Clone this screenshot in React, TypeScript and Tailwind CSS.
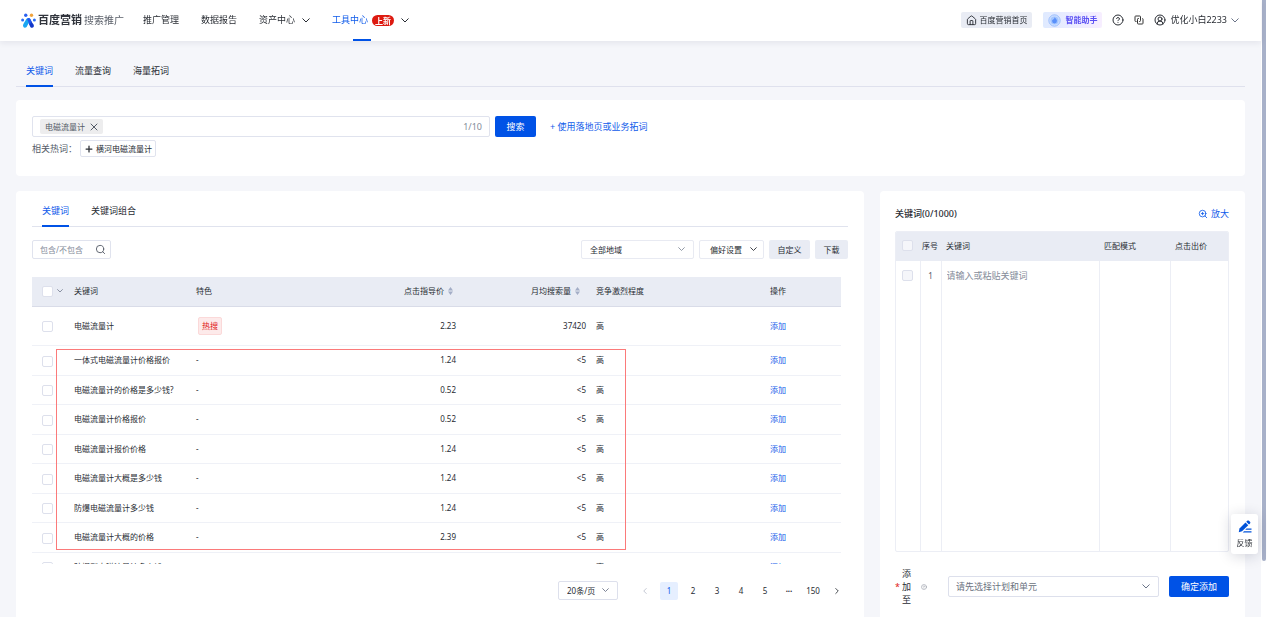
import type { ReactNode } from "react";
import clsx from "clsx";
import { ChevronLeft, ChevronRight, CircleHelp, CircleUserRound, House, Plus, Search, X, ZoomIn } from "lucide-react";

type Row = {
  word: string;
  price: string;
  volume: string;
  hot?: boolean;
};

const ROWS: Row[] = [
  { word: "电磁流量计", price: "2.23", volume: "37420", hot: true },
  { word: "一体式电磁流量计价格报价", price: "1.24", volume: "<5" },
  { word: "电磁流量计的价格是多少钱?", price: "0.52", volume: "<5" },
  { word: "电磁流量计价格报价", price: "0.52", volume: "<5" },
  { word: "电磁流量计报价价格", price: "1.24", volume: "<5" },
  { word: "电磁流量计大概是多少钱", price: "1.24", volume: "<5" },
  { word: "防爆电磁流量计多少钱", price: "1.24", volume: "<5" },
  { word: "电磁流量计大概的价格", price: "2.39", volume: "<5" },
  { word: "防爆型电磁流量计多少钱", price: "", volume: "" },
];

const PAGES = ["1", "2", "3", "4", "5"];

function Logo() {
  return (
    <svg viewBox="0 0 30 30" className="size-[15px]" aria-hidden="true">
      <circle cx="9.5" cy="4.5" r="3.4" fill="#2b62f0" />
      <circle cx="21" cy="4.5" r="3.4" fill="#f0a23c" />
      <circle cx="3.2" cy="14" r="3" fill="#2b6df5" />
      <circle cx="26.8" cy="14" r="3" fill="#2b6df5" />
      <path d="M11 12h6l8 11c2 3.500 0 6.500-3 6.500-2 0-3-1-4-3z" fill="#1237c9" />
      <path d="M15 10c-2.500 0-4 1.500-5.200 3.500L4.800 22c-2 3.500 0 7.500 3.200 7.500 2.200 0 3.300-1.500 4.300-3.500L19 13c-1-2-2.200-3-4-3z" fill="#1ba6f2" />
      <path d="M12 12c2-2.500 5-2.500 7 .5l2 4-3.500 7z" fill="#2257ee" />
    </svg>
  );
}

function ChevronDown({ className }: { className?: string }) {
  return (
    <svg
      viewBox="0 0 16 10"
      className={clsx("shrink-0", className)}
      fill="none"
      stroke="currentColor"
      strokeWidth="2"
      strokeLinecap="round"
      strokeLinejoin="round"
      aria-hidden="true"
    >
      <path d="M1.500 1.500L8 8l6.500-6.500" />
    </svg>
  );
}

function CopyIcon() {
  return (
    <svg viewBox="0 0 20 20" className="size-[10px]" fill="none" stroke="#333" strokeWidth="2" aria-hidden="true">
      <path d="M5 13H3.500A1.500 1.500 0 0 1 2 11.500v-8A1.500 1.500 0 0 1 3.500 2h8A1.500 1.500 0 0 1 13 3.500V11a2 2 0 0 1-2 2h-1" />
      <path d="M10 7H8.500A1.500 1.500 0 0 0 7 8.500v8A1.500 1.500 0 0 0 8.500 18h8a1.500 1.500 0 0 0 1.500-1.500v-8A1.500 1.500 0 0 0 16.500 7" />
    </svg>
  );
}

function AssistantIcon() {
  return (
    <svg viewBox="0 0 24 24" className="size-[13px]" aria-hidden="true">
      <circle cx="12" cy="12" r="10.5" fill="#cfe0ff" stroke="#8fb6fb" strokeWidth="1.5" />
      <circle cx="12" cy="12" r="7.5" fill="#a4c6ff" />
      <path d="M12 6c3 2.500 4.500 4.500 4.500 7a4.500 4.500 0 0 1-9 0c0-1.500 1-2.500 2.200-3 1.300-.5 2.300-2 2.300-4z" fill="#5a90fa" />
    </svg>
  );
}

function SortIcon() {
  return (
    <svg viewBox="0 0 10 16" className="h-[8px] w-[5px]" fill="#a3adc6" aria-hidden="true">
      <path d="M5 0l5 7H0zM5 16l5-7H0z" />
    </svg>
  );
}

function EditIcon() {
  return (
    <svg viewBox="0 0 28 26" className="h-[13px] w-[14px]" fill="#0052d9" aria-hidden="true">
      <path d="M18.500 1.500c1-1 2.300-1 3.300 0l2.200 2.200c1 1 1 2.300 0 3.300l-2 2-5.500-5.500z" />
      <path d="M15 5l5.500 5.500L8 22.500 1.500 24.500 3 17z" />
      <path d="M17 17h10v2.500H14.500zM12 22.500h15V25H9.500z" />
    </svg>
  );
}

function Checkbox({ label, muted }: { label: string; muted?: boolean }) {
  return (
    <input
      type="checkbox"
      aria-label={label}
      className={clsx(
        "block size-[11px] shrink-0 appearance-none rounded-[2px] border border-[#dde0ec]",
        muted ? "bg-[#f5f6fa]" : "bg-white"
      )}
    />
  );
}

function Tab({ children, active }: { children: ReactNode; active?: boolean }) {
  return (
    <button
      type="button"
      role="tab"
      aria-selected={!!active}
      className={clsx(
        "-mb-px border-b-2 text-[9px]",
        active ? "border-[#0052e6] text-[#0f5bea]" : "border-transparent text-[#282c33]"
      )}
    >
      {children}
    </button>
  );
}

function Header() {
  return (
    <header className="relative z-10 flex h-[41px] items-center bg-white pr-[22px] pb-px pl-[21px] shadow-[0_2px_6px_rgba(20,30,60,0.08)]">
      <a href="#home" className="flex items-center">
        <Logo />
        <span className="ml-[2px] text-[11px] font-bold text-[#30343c]">百度营销</span>
        <span className="ml-[2px] text-[10px] text-[#5a5f69]">搜索推广</span>
      </a>
      <nav className="ml-[19px] flex h-full items-center gap-[22px] text-[9px] text-[#282c33]">
        <a href="#manage">推广管理</a>
        <a href="#report">数据报告</a>
        <a href="#assets" className="flex items-center gap-[7px]">
          资产中心
          <ChevronDown className="w-2" />
        </a>
        <a href="#tools" className="relative flex h-full items-center">
          <span className="text-[#0f5bea]">工具中心</span>
          <span className="ml-1 rounded-full bg-[#dd1a10] px-[3px] text-[8px] leading-[11px] font-bold text-white">上新</span>
          <ChevronDown className="ml-[7px] w-2" />
          <span className="absolute -bottom-px left-[21px] h-[2px] w-[18px] bg-[#0052e6]" />
        </a>
      </nav>
      <div className="ml-auto flex items-center text-[#282c33]">
        <button type="button" className="flex h-4 items-center gap-[2px] rounded-[2px] bg-[#e9ecf4] px-[5px] text-[8px]">
          <House className="size-[11px]" />
          百度营销首页
        </button>
        <button
          type="button"
          className="ml-[11px] flex h-4 items-center gap-1 rounded-[2px] bg-linear-to-r from-[#dfeaff] to-[#f7eeff] px-[5px] text-[8px] font-bold text-[#5a4ff3]"
        >
          <AssistantIcon />
          智能助手
        </button>
        <button type="button" aria-label="帮助" className="ml-[10px]">
          <CircleHelp className="size-3" />
        </button>
        <button type="button" aria-label="切换" className="ml-[10px]">
          <CopyIcon />
        </button>
        <button type="button" className="ml-[10px] flex items-center gap-1 text-[9px]">
          <CircleUserRound className="size-3" />
          优化小白2233
          <ChevronDown className="w-2 text-[#6b7488]" />
        </button>
      </div>
    </header>
  );
}

function SearchCard() {
  return (
    <section className="mt-[13px] h-[76px] rounded-[4px] bg-white px-4 pt-4">
      <div className="flex items-center">
        <div className="flex h-[21px] w-[458px] items-center rounded-[2px] border border-[#e0e3ee] px-[7px]">
          <span className="flex h-[15px] items-center gap-[3px] rounded-[2px] bg-[#ededee] pr-[3px] pl-[5px] text-[8px] text-[#545b67]">
            电磁流量计
            <button type="button" aria-label="移除电磁流量计">
              <X className="size-3" />
            </button>
          </span>
          <input aria-label="关键词" className="min-w-0 flex-1 text-[9px] outline-none" />
          <span className="text-[9px] text-[#848b99]">1/10</span>
        </div>
        <button type="button" className="ml-[5px] h-[21px] w-[41px] rounded-[2px] bg-[#0052e6] text-[9px] text-white">
          搜索
        </button>
        <a href="#expand" className="ml-[14px] text-[9px] text-[#0f5bea]">
          + 使用落地页或业务拓词
        </a>
      </div>
      <div className="mt-[3px] flex items-center gap-[3px]">
        <span className="text-[9px] text-[#545b67]">相关热词：</span>
        <button type="button" className="flex h-[17px] items-center gap-[2px] rounded-[2px] border border-[#e0e3ee] px-[3px] text-[8px] text-[#282c33]">
          <Plus className="size-[10px]" strokeWidth={3} />
          横河电磁流量计
        </button>
      </div>
    </section>
  );
}

function KeywordTable() {
  return (
    <div className="relative mt-[18px] mr-[7px] h-[287px] overflow-hidden">
      <table className="w-full table-fixed text-left text-[8px] text-[#282c33]">
        <colgroup>
          <col className="w-[37px]" />
          <col className="w-[122px]" />
          <col className="w-[135px]" />
          <col className="w-[135px]" />
          <col className="w-[130px]" />
          <col />
          <col className="w-[76px]" />
        </colgroup>
        <thead>
          <tr className="h-[29px] border-b border-[#d9dce8] bg-[#e9ecf4] *:px-[5px] *:font-normal">
            <th>
              <div className="flex items-center gap-1 pl-[5px]">
                <Checkbox label="全选" />
                <ChevronDown className="w-[6px] text-[#6b7488]" />
              </div>
            </th>
            <th>关键词</th>
            <th>特色</th>
            <th>
              <div className="flex items-center justify-end gap-1 pr-[3px]">
                点击指导价
                <SortIcon />
              </div>
            </th>
            <th>
              <div className="flex items-center justify-end gap-1 pr-[6px]">
                月均搜索量
                <SortIcon />
              </div>
            </th>
            <th>竞争激烈程度</th>
            <th>操作</th>
          </tr>
        </thead>
        <tbody>
          {ROWS.map((row) => (
            <tr
              key={row.word}
              className={clsx("border-b border-[#eff1f7] *:px-[5px]", row.hot ? "h-[39px]" : "even:h-[30px] odd:h-[29px]")}
            >
              <td>
                <div className="pt-[2px] pl-[5px]">
                  <Checkbox label={row.word} />
                </div>
              </td>
              <td className="whitespace-nowrap">{row.word}</td>
              <td>
                {row.hot ? (
                  <span className="ml-[2px] inline-block rounded-[2px] border border-[#fbd9d9] bg-[#fdeaea] px-[3px] text-[8px] leading-4 text-[#e02020]">
                    热搜
                  </span>
                ) : (
                  "-"
                )}
              </td>
              <td className="text-right">{row.price}</td>
              <td className="text-right">{row.volume}</td>
              <td>高</td>
              <td>
                <button type="button" className="text-[#0f5bea]">
                  添加
                </button>
              </td>
            </tr>
          ))}
        </tbody>
      </table>
      {/* highlighted range of suggested words */}
      <div className="pointer-events-none absolute top-[72px] left-6 h-[201px] w-[570px] border border-[#fb7a7a]" />
    </div>
  );
}

function Pagination() {
  return (
    <div className="mt-[17px] flex items-center justify-end gap-[6px] pr-[2px] text-[8px] text-[#282c33]">
      <div className="relative mr-3 flex items-center">
        <select
          aria-label="每页条数"
          className="h-[19px] w-[60px] appearance-none rounded-[2px] border border-[#dde0ec] bg-white pl-2 text-[8px]"
        >
          <option>20条/页</option>
        </select>
        <ChevronDown className="pointer-events-none absolute right-[9px] w-[7px] text-[#6b7488]" />
      </div>
      <button type="button" aria-label="上一页" className="flex size-[18px] items-center justify-center text-[#b8bdca]">
        <ChevronLeft className="size-[10px]" />
      </button>
      {PAGES.map((page) => (
        <button
          key={page}
          type="button"
          className={clsx("size-[18px] rounded-[2px]", page === "1" && "bg-[#e6efff] text-[#0f5bea]")}
        >
          {page}
        </button>
      ))}
      <span className="w-[18px] text-center font-bold">···</span>
      <button type="button" className="h-[18px] w-[18px]">
        150
      </button>
      <button type="button" aria-label="下一页" className="flex size-[18px] items-center justify-center">
        <ChevronRight className="size-[10px]" />
      </button>
    </div>
  );
}

function ResultPanel() {
  return (
    <section className="min-w-0 flex-1 rounded-t-[4px] bg-white px-4 pb-4">
      <div role="tablist" className="flex h-9 gap-[22px] border-b border-[#e0e3ee] px-[10px] pt-[6px]">
        <Tab active>关键词</Tab>
        <Tab>关键词组合</Tab>
      </div>
      <div className="mt-[13px] flex items-center gap-[5px] text-[8px] text-[#282c33]">
        <label className="flex h-[19px] w-[79px] items-center rounded-[2px] border border-[#e0e3ee] pr-1 pl-[7px]">
          <input
            aria-label="包含/不包含"
            placeholder="包含/不包含"
            className="w-full min-w-0 text-[8px] outline-none placeholder:text-[#848b99]"
          />
          <Search className="size-[11px] shrink-0 text-[#545b67]" />
        </label>
        <div className="relative ml-auto flex items-center">
          <select
            aria-label="地域"
            className="h-[19px] w-[113px] appearance-none rounded-[2px] border border-[#e8eaf2] bg-white pl-2 text-[8px]"
          >
            <option>全部地域</option>
          </select>
          <ChevronDown className="pointer-events-none absolute right-[9px] w-[7px] text-[#848b99]" />
        </div>
        <button type="button" className="flex h-[19px] w-[65px] items-center justify-between rounded-[2px] border border-[#e8eaf2] pr-[6px] pl-[10px]">
          偏好设置
          <ChevronDown className="w-[7px]" />
        </button>
        <button type="button" className="h-[19px] w-[41px] rounded-[2px] bg-[#e9ecf4]">
          自定义
        </button>
        <button type="button" className="h-[19px] w-[33px] rounded-[2px] bg-[#e9ecf4]">
          下载
        </button>
      </div>
      <KeywordTable />
      <Pagination />
    </section>
  );
}

function SelectedPanel() {
  return (
    <aside className="w-[365px] shrink-0 rounded-t-[4px] bg-white pr-4 pb-4 pl-[15px]">
      <div className="flex h-10 items-center justify-between pt-[5px] text-[9px]">
        <h2 className="font-medium text-[#282c33]">关键词(0/1000)</h2>
        <button type="button" className="flex items-center gap-[3px] text-[#0f5bea]">
          <ZoomIn className="size-[10px]" />
          放大
        </button>
      </div>
      <div className="overflow-hidden rounded-[2px] border border-[#eceef5]">
        <table className="w-full table-fixed text-left text-[8px] text-[#282c33]">
          <colgroup>
            <col className="w-[24px]" />
            <col className="w-[21px]" />
            <col />
            <col className="w-[71px]" />
            <col className="w-[58px]" />
          </colgroup>
          <thead>
            <tr className="h-[29px] bg-[#e9ecf4] *:px-[5px] *:pb-[2px] *:font-normal">
              <th>
                <div className="pl-px">
                  <Checkbox label="全选已选关键词" muted />
                </div>
              </th>
              <th className="whitespace-nowrap">
                <span className="-ml-[3px]">序号</span>
              </th>
              <th>关键词</th>
              <th>匹配模式</th>
              <th>点击出价</th>
            </tr>
          </thead>
          <tbody>
            <tr className="h-[290px] *:border-r *:border-[#eceef5] *:px-[5px] *:pt-[9px] *:align-top *:last:border-r-0">
              <td>
                <div className="pl-px">
                  <Checkbox label="第1行" muted />
                </div>
              </td>
              <td className="text-center text-[#545b67]">1</td>
              <td>
                <input
                  aria-label="添加关键词"
                  placeholder="请输入或粘贴关键词"
                  className="block w-full text-[9px] leading-[12px] outline-none placeholder:text-[#848b99]"
                />
              </td>
              <td />
              <td />
            </tr>
          </tbody>
        </table>
      </div>
      <div className="mt-[15px] flex items-center text-[9px]">
        <span className="w-[7px] text-[#e02020]">*</span>
        <label htmlFor="plan" className="w-[10px] leading-[13px] text-[#282c33]">
          添加至
        </label>
        <CircleHelp className="ml-[9px] size-[6px] text-[#848b99]" />
        <div className="relative ml-[21px] flex min-w-0 flex-1 items-center">
          <select
            id="plan"
            className="h-[21px] w-full appearance-none rounded-[2px] border border-[#dde0ec] bg-white pl-[7px] text-[9px] text-[#6b7280]"
          >
            <option>请先选择计划和单元</option>
          </select>
          <ChevronDown className="pointer-events-none absolute right-[9px] w-2 text-[#6b7488]" />
        </div>
        <button type="button" className="ml-[10px] h-[21px] w-[60px] rounded-[2px] bg-[#0052e6] text-[9px] text-white">
          确定添加
        </button>
      </div>
    </aside>
  );
}

export default function App() {
  return (
    <div className="flex min-h-screen bg-white font-['Noto_Sans','Noto_Sans_CJK_SC',sans-serif]">
      <div className="flex min-w-0 flex-1 flex-col bg-[#f5f6fa]">
        <Header />
        <main className="flex flex-1 flex-col px-4">
          <div role="tablist" className="flex h-[46px] gap-[22px] border-b border-[#dfe1ed] px-[10px] pt-4">
            <Tab active>关键词</Tab>
            <Tab>流量查询</Tab>
            <Tab>海量拓词</Tab>
          </div>
          <SearchCard />
          <div className="mt-[15px] flex flex-1 gap-4">
            <ResultPanel />
            <SelectedPanel />
          </div>
        </main>
      </div>
      <div className="w-[6px]" />
      <div className="fixed top-0 right-px h-[561px] w-1 rounded-b-full bg-[#a8b1c9]" />
      <button
        type="button"
        className="fixed right-[9px] bottom-[63px] z-20 flex h-10 w-[27px] flex-col items-center justify-center gap-[5px] rounded-[3px] bg-white text-[8px] leading-[10px] text-[#282c33] shadow-[0_2px_14px_rgba(20,30,60,0.18)]"
      >
        <EditIcon />
        反馈
      </button>
    </div>
  );
}
